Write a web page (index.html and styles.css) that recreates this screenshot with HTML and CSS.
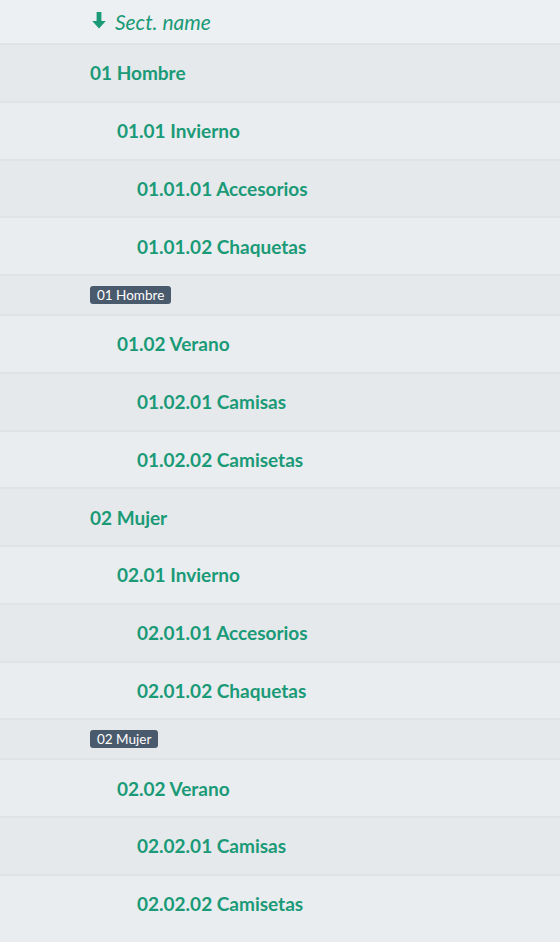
FILE: index.html
```html
<!DOCTYPE html>
<html lang="es">
<head>
<meta charset="utf-8">
<link rel="stylesheet" href="styles.css">
</head>
<body>
<div class="list">
  <div class="head">
    <svg class="arrow" viewBox="0 0 14 17" width="14" height="17"><path d="M4.6 0h4.8v9h4.4L7 16.5 0.2 9h4.4z" fill="#1a9a77"/></svg>
    <span class="head-text">Sect. name</span>
  </div>
  <div class="row odd l1">01 Hombre</div>
  <div class="row l2">01.01 Invierno</div>
  <div class="row odd l3">01.01.01 Accesorios</div>
  <div class="row l3">01.01.02 Chaquetas</div>
  <div class="group odd"><span class="badge">01 Hombre</span></div>
  <div class="row l2">01.02 Verano</div>
  <div class="row odd l3">01.02.01 Camisas</div>
  <div class="row l3">01.02.02 Camisetas</div>
  <div class="row odd l1">02 Mujer</div>
  <div class="row l2">02.01 Invierno</div>
  <div class="row odd l3">02.01.01 Accesorios</div>
  <div class="row l3">02.01.02 Chaquetas</div>
  <div class="group odd"><span class="badge">02 Mujer</span></div>
  <div class="row l2">02.02 Verano</div>
  <div class="row odd l3">02.02.01 Camisas</div>
  <div class="row l3">02.02.02 Camisetas</div>
</div>
</body>
</html>
```
FILE: styles.css
```css
html, body {
  margin: 0;
  padding: 0;
  background: #e9edef;
  font-family: Lato, "Noto Sans", sans-serif;
}
.list {
  display: flex;
  flex-direction: column;
}
.head {
  height: 43px;
  box-sizing: border-box;
  display: flex;
  align-items: center;
  padding-left: 92px;
  gap: 9px;
  background: #edf0f2;
}
.head-text {
  font-style: italic;
  font-size: 21px;
  color: #1a9a77;
}
.arrow {
  display: block;
  margin-top: -3px;
}
.row {
  height: 57.75px;
  flex: none;
  box-sizing: border-box;
  border-top: 2px solid #dfe3e6;
  display: flex;
  align-items: center;
  font-weight: bold;
  font-size: 19px;
  color: #1a9a77;
  background: #e9edef;
}
.row.odd, .group.odd {
  background: #e5e9ec;
}
.l1 { padding-left: 90px; }
.l2 { padding-left: 117px; }
.l3 { padding-left: 137px; }
.group {
  height: 40px;
  flex: none;
  box-sizing: border-box;
  border-top: 2px solid #dfe3e6;
  display: flex;
  align-items: center;
  padding-left: 90px;
}
.badge {
  background: #4a5a6d;
  color: #ffffff;
  font-size: 13.5px;
  line-height: 18px;
  padding: 0 7px;
  border-radius: 3px;
}
```
